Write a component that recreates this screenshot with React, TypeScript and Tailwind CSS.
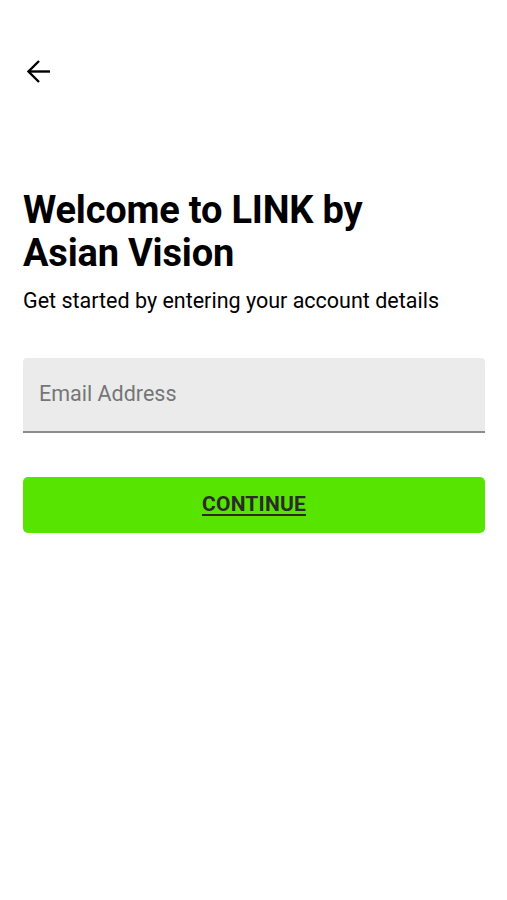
export default function App() {
  return (
    <div className="min-h-[900px] w-full bg-white pl-[23px] pr-[22px] pt-[59px] font-['Roboto','Liberation_Sans',sans-serif] text-black">
      <button className="ml-[3px] block h-6 w-[26px] text-black">
        <svg viewBox="0 0 26 24" width="26" height="24" fill="none" stroke="currentColor" strokeWidth="2.4">
          <path d="M2.5 12.5H24" />
          <path d="M13 2L2.5 12.5L13 23" />
        </svg>
      </button>

      <h1 className="mt-[106px] text-[38px] font-bold leading-[43px] tracking-[-0.2px]">
        Welcome to LINK by
        <br />
        Asian Vision
      </h1>
      <p className="mt-[12px] text-[21.5px] leading-[28px]">Get started by entering your account details</p>

      <div className="mt-[43px] flex h-[75px] items-center rounded-t-[4px] border-b-2 border-[#8c8c8c] bg-[#ebebeb] px-4">
        <span className="text-[21.5px] text-[#767676]">Email Address</span>
      </div>

      <button className="mt-[44px] flex h-[56px] w-full items-center justify-center rounded-[5px] bg-[#57e500]">
        <span className="text-[21px] font-bold tracking-[0.2px] text-[#2b2b2b] underline underline-offset-[3px]">CONTINUE</span>
      </button>
    </div>
  )
}
